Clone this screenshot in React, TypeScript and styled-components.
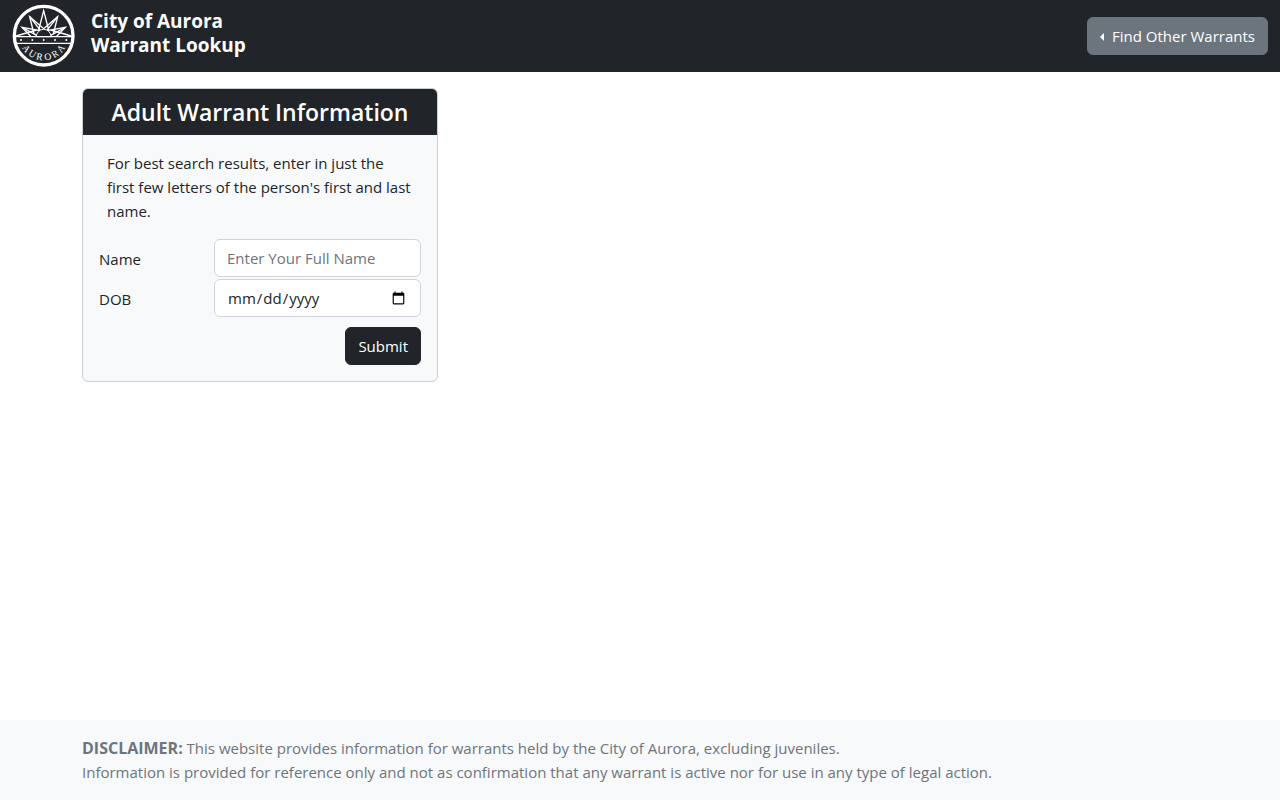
import React from 'react';
import styled, { createGlobalStyle } from 'styled-components';

const GlobalStyle = createGlobalStyle`
  *, *::before, *::after { box-sizing: border-box; }
  body {
    margin: 0;
    background: #fff;
    color: #212529;
    font-family: 'Open Sans', 'Noto Sans', sans-serif;
    font-size: 15px;
    line-height: 24px;
  }
`;

const Page = styled.div`
  display: flex;
  flex-direction: column;
  min-height: 100vh;
`;

const Navbar = styled.header`
  display: flex;
  align-items: center;
  justify-content: space-between;
  padding: 4px 12px;
  background: #212529;
  color: #fff;
`;

const Brand = styled.a`
  display: flex;
  align-items: flex-start;
  gap: 15px;
  color: inherit;
  text-decoration: none;
`;

const BrandName = styled.span`
  padding-top: 5px;
  font-size: 19px;
  font-weight: 700;
  line-height: 24px;
`;

const Seal = styled.svg`
  display: block;
  width: 64px;
  height: 64px;
`;

const Button = styled.button<{ $tone: 'dark' | 'secondary' }>`
  display: inline-flex;
  align-items: center;
  gap: 8px;
  height: 38px;
  padding: 6px 12px;
  border: 1px solid ${({ $tone }) => ($tone === 'dark' ? '#212529' : '#6c757d')};
  border-radius: 6px;
  background: ${({ $tone }) => ($tone === 'dark' ? '#212529' : '#6c757d')};
  color: #fff;
  font: inherit;
  cursor: pointer;
`;

const Caret = styled.span`
  margin-top: 2px;
  border-top: 4px solid transparent;
  border-right: 4px solid currentColor;
  border-bottom: 4px solid transparent;
`;

const Container = styled.div`
  width: 100%;
  max-width: 1140px;
  margin: 0 auto;
  padding: 0 12px;
`;

const Main = styled.main`
  flex: 1;
  padding: 16px 0;
`;

const Columns = styled.div`
  display: grid;
  grid-template-columns: repeat(3, minmax(0, 1fr));
  gap: 24px;

  @media (max-width: 900px) {
    grid-template-columns: minmax(0, 1fr);
  }
`;

const Card = styled.section`
  overflow: hidden;
  border: 1px solid #cbcfd3;
  border-radius: 6px;
  background: #f8f9fa;
`;

const CardTitle = styled.h1`
  margin: 0;
  padding: 8px 16px;
  background: #212529;
  color: #fff;
  font-size: 23px;
  font-weight: 600;
  line-height: 30px;
  text-align: center;
`;

const CardBody = styled.form`
  padding: 16px;
`;

const Hint = styled.p`
  margin: 0 0 16px;
  padding: 0 8px;
`;

const Field = styled.div`
  display: grid;
  grid-template-columns: 115px minmax(0, 1fr);
  align-items: center;
  margin-bottom: 2px;
`;

const Label = styled.label`
  padding-top: 2px;
`;

const Input = styled.input`
  width: 100%;
  height: 38px;
  padding: 6px 12px;
  border: 1px solid #ced4da;
  border-radius: 6px;
  background: #fff;
  color: #212529;
  font: inherit;

  &::placeholder {
    color: #6c757d;
    opacity: 1;
  }
`;

const Actions = styled.div`
  display: flex;
  justify-content: flex-end;
  padding-top: 8px;
`;

const Footer = styled.footer`
  padding: 16px 0;
  background: #f8f9fa;
  color: #6c757d;
`;

const Disclaimer = styled.p`
  margin: 0;
`;

const DisclaimerTitle = styled.strong`
  font-size: 16px;
  line-height: 20px;
`;

const sealLetters = [
  { letter: 'A', angle: 53 },
  { letter: 'U', angle: 32 },
  { letter: 'R', angle: 11 },
  { letter: 'O', angle: -11 },
  { letter: 'R', angle: -32 },
  { letter: 'A', angle: -53 },
];

function CitySeal() {
  return (
    <Seal viewBox="0 0 192 192" role="img" aria-label="City of Aurora seal">
      <circle cx="95" cy="95" r="88" fill="none" stroke="#fff" strokeWidth="10" />
      <g fill="none" stroke="#fff" strokeWidth="4" strokeLinejoin="miter">
        <path d="M80 78 L95 20 L110 78" />
        <path d="M66 90 L53 38 L95 74 L137 38 L124 90" />
        <path d="M53 38 L86 80 M137 38 L104 80" />
        <path d="M56 97 L30 70 L84 80 M134 97 L160 70 L106 80" />
        <path d="M30 70 L74 94 M160 70 L116 94" />
        <path d="M12 96 L74 78 M178 96 L116 78" />
      </g>
      <path d="M73 98 A22 22 0 0 1 117 98 Z" fill="#212529" stroke="#fff" strokeWidth="3" />
      <path d="M8 98 H182 M8 118 H182" stroke="#fff" strokeWidth="4" />
      <g fill="#fff">
        <circle cx="27" cy="108" r="3" />
        <circle cx="61" cy="108" r="3" />
        <circle cx="95" cy="108" r="3" />
        <circle cx="129" cy="108" r="3" />
        <circle cx="163" cy="108" r="3" />
      </g>
      <g fill="#fff" fontFamily="'Liberation Serif', serif" fontSize="29" textAnchor="middle">
        {sealLetters.map(({ letter, angle }) => (
          <text key={angle} x="95" y="169" transform={`rotate(${angle} 95 95)`}>
            {letter}
          </text>
        ))}
      </g>
    </Seal>
  );
}

export default function App() {
  return (
    <Page>
      <GlobalStyle />
      <Navbar>
        <Brand href="#">
          <CitySeal />
          <BrandName>
            City of Aurora
            <br />
            Warrant Lookup
          </BrandName>
        </Brand>
        <Button type="button" $tone="secondary">
          <Caret />
          Find Other Warrants
        </Button>
      </Navbar>

      <Main>
        <Container>
          <Columns>
            <Card>
              <CardTitle>Adult Warrant Information</CardTitle>
              <CardBody onSubmit={(event: React.FormEvent) => event.preventDefault()}>
                <Hint>
                  For best search results, enter in just the first few letters of the person's first
                  and last name.
                </Hint>
                <Field>
                  <Label htmlFor="name">Name</Label>
                  <Input id="name" type="text" placeholder="Enter Your Full Name" />
                </Field>
                <Field>
                  <Label htmlFor="dob">DOB</Label>
                  <Input id="dob" type="date" />
                </Field>
                <Actions>
                  <Button type="submit" $tone="dark">
                    Submit
                  </Button>
                </Actions>
              </CardBody>
            </Card>
          </Columns>
        </Container>
      </Main>

      <Footer>
        <Container>
          <Disclaimer>
            <DisclaimerTitle>DISCLAIMER:</DisclaimerTitle> This website provides information for
            warrants held by the City of Aurora, excluding juveniles.
            <br />
            Information is provided for reference only and not as confirmation that any warrant is
            active nor for use in any type of legal action.
          </Disclaimer>
        </Container>
      </Footer>
    </Page>
  );
}
